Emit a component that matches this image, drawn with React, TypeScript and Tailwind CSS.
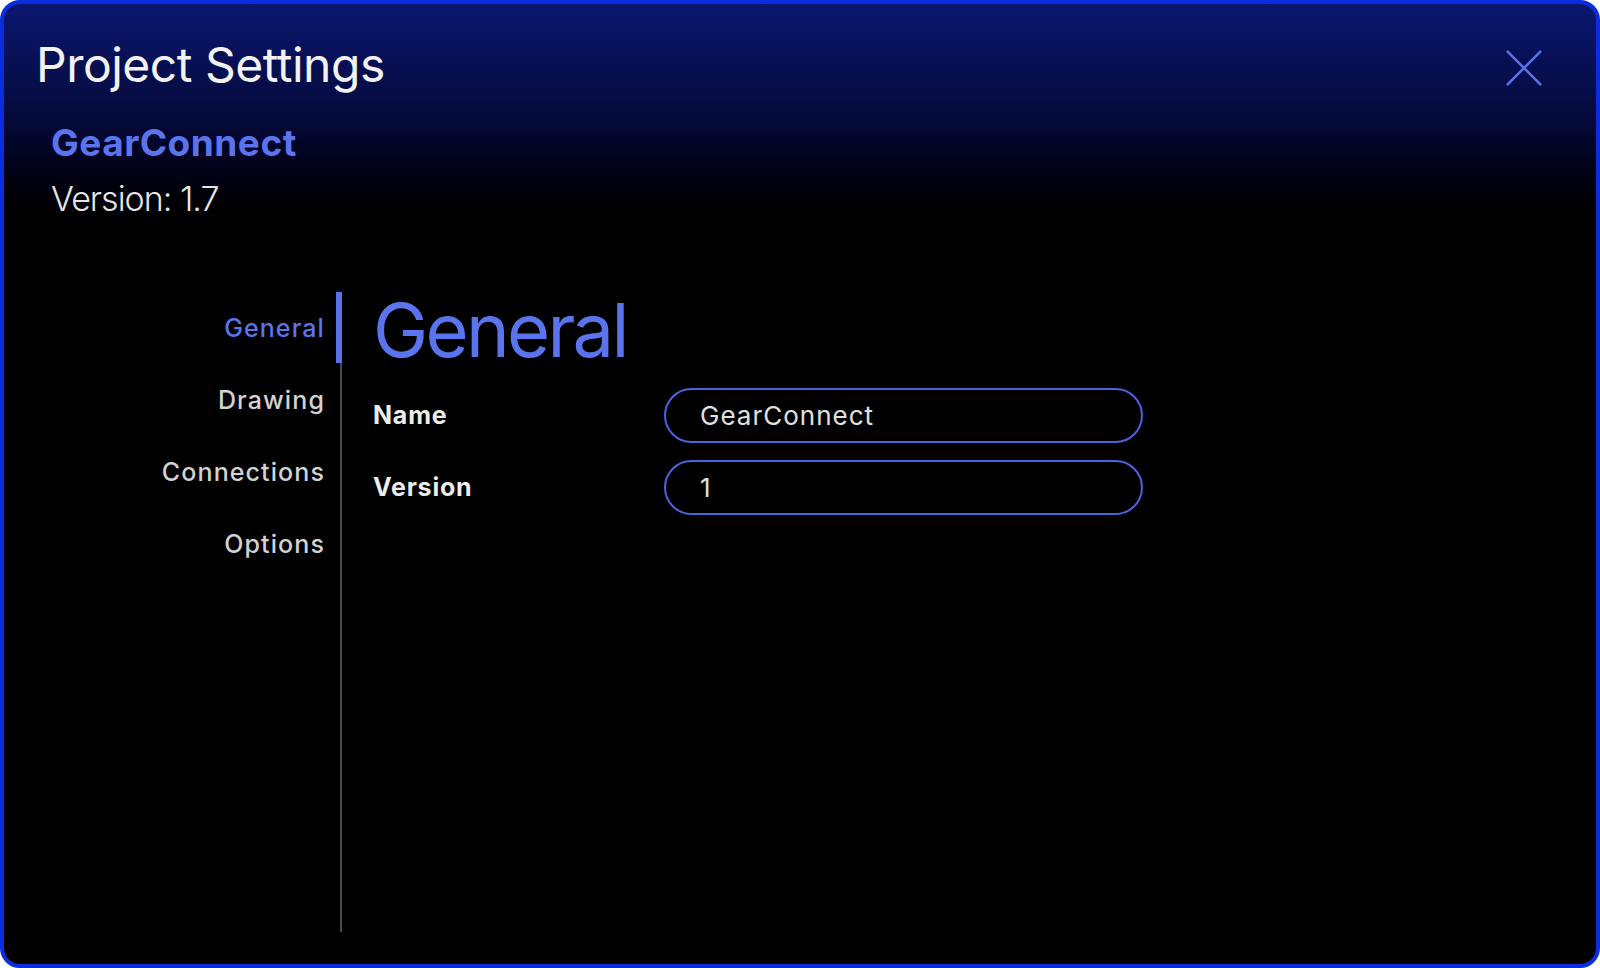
import React from "react";

export default function App() {
  const items = ["General", "Drawing", "Connections", "Options"];
  return (
    <div className="w-full h-[968px] bg-white" style={{ fontFamily: "Inter, Roboto, 'Liberation Sans', sans-serif" }}>
      <div className="relative h-full rounded-[20px] border-4 border-[#0b2de0] bg-gradient-to-b from-[#0b1670] via-[#050a3a] via-[12%] to-black to-[25%] flex flex-col overflow-hidden">
        <div className="pl-[32px] pt-[33px]">
          <h1 className="text-[48px] leading-[56px] text-[#f2f2f2] font-normal tracking-[-0.5px]">Project Settings</h1>
          <div className="pl-[15px] mt-[28px]">
            <div className="text-[37px] leading-[44px] font-bold text-[#5a74ee] tracking-[0.5px]">GearConnect</div>
            <div className="text-[34px] leading-[44px] font-light text-[#e6e6e6] mt-[12px] tracking-[-1px]">Version: 1.7</div>
          </div>
        </div>
        <button className="absolute right-[52px] top-[44px] w-[40px] h-[40px] flex items-center justify-center">
          <svg width="38" height="38" viewBox="0 0 38 38" fill="none" stroke="#5a6ee6" strokeWidth="2.5">
            <path d="M2 2 L36 36 M36 2 L2 36" />
          </svg>
        </button>
        <div className="flex flex-1 mt-[71px] pb-[32px]">
          <nav className="w-[338px] flex flex-col items-end border-r-2 border-[#4a4a4a] relative">
            {items.map((it, i) => (
              <div key={it} className={`pr-[15px] text-[25px] leading-[72px] font-medium tracking-[1.1px] ${i === 0 ? "text-[#5a74ee]" : "text-[#d2d2d2]"}`}>
                {it}
              </div>
            ))}
            <div className="absolute right-[-2px] top-0 w-[6px] h-[71px] bg-[#5a72e8]" />
          </nav>
          <div className="flex-1 pl-[31px]">
            <div className="text-[74px] leading-[76px] text-[#5a74ee] font-normal tracking-[-2.7px]">General</div>
            <div className="mt-[20px] flex flex-col gap-[17px]">
              <div className="flex items-center">
                <div className="w-[291px] text-[25px] font-bold text-[#ececec] tracking-[0.8px]">Name</div>
                <div className="w-[479px] h-[55px] rounded-full border-2 border-[#4b63db] flex items-center pl-[34px] text-[26px] text-[#e0e0e0] tracking-[1px]">GearConnect</div>
              </div>
              <div className="flex items-center">
                <div className="w-[291px] text-[25px] font-bold text-[#ececec] tracking-[0.8px]">Version</div>
                <div className="w-[479px] h-[55px] rounded-full border-2 border-[#4b63db] flex items-center pl-[34px] text-[26px] text-[#e0e0e0] tracking-[1px]">1</div>
              </div>
            </div>
          </div>
        </div>
      </div>
    </div>
  );
}
